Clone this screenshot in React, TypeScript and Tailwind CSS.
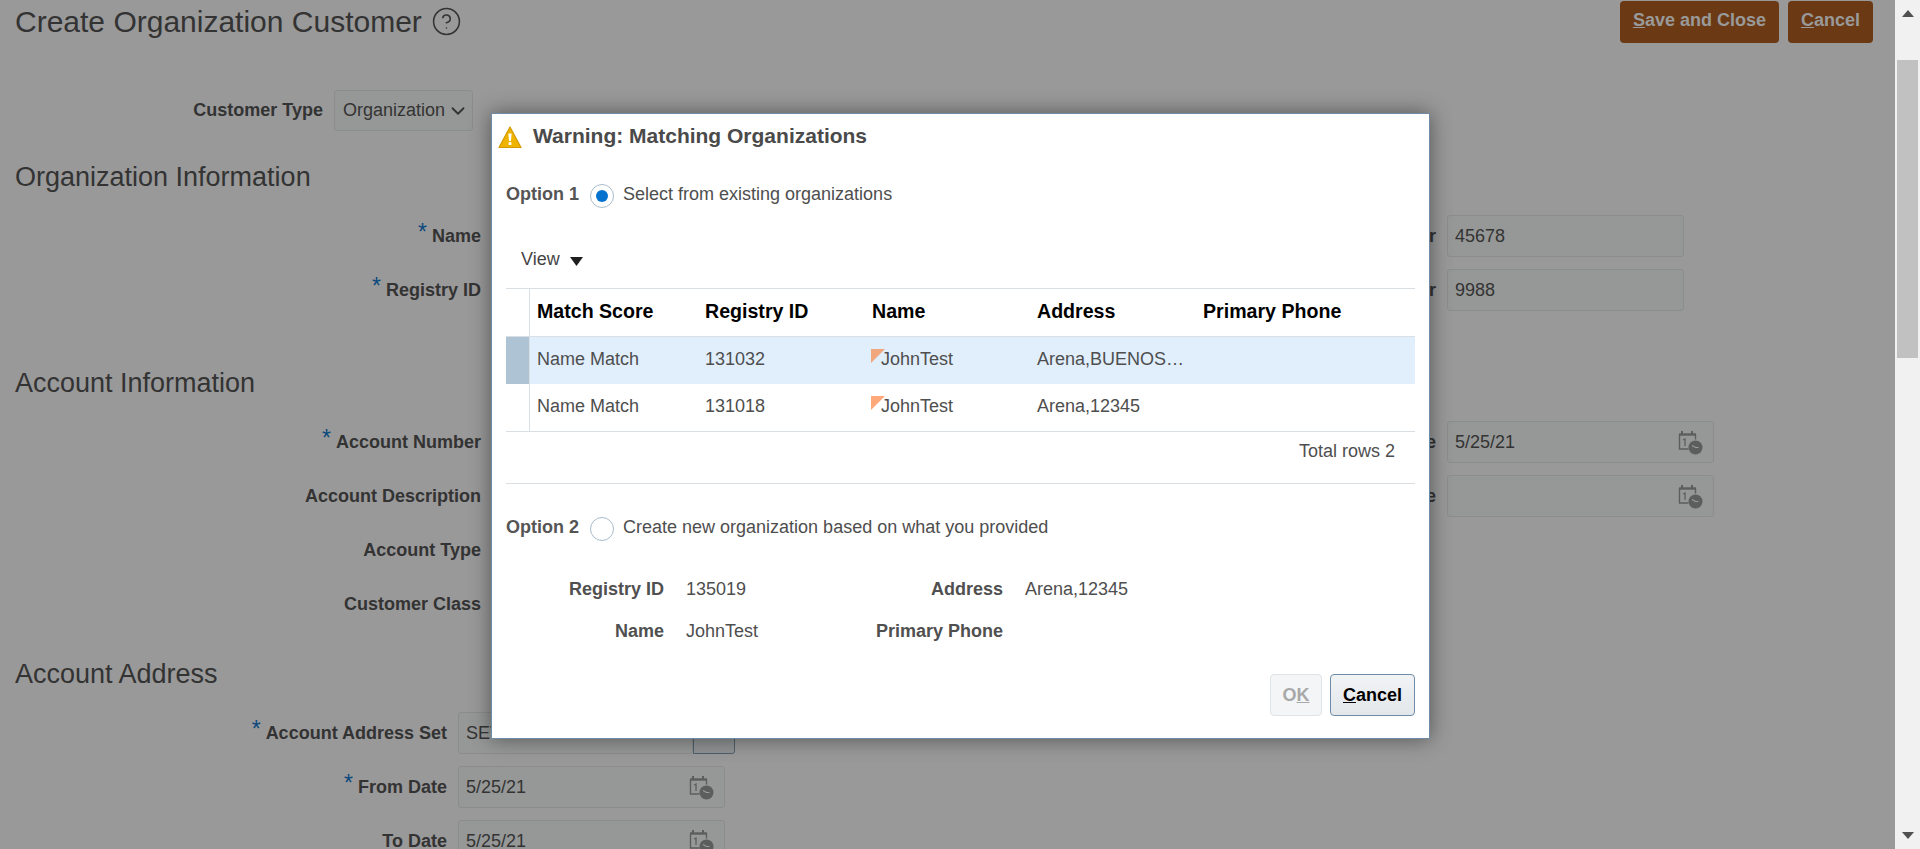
import React from "react";
import { ChevronDown, CircleHelp } from "lucide-react";

const font = { fontFamily: '"Liberation Sans", Arial, sans-serif' };

function CalendarIcon() {
  return (
    <svg width="25" height="25" viewBox="0 0 25 25" className="shrink-0">
      <path d="M1 4.5h17" stroke="#5c5e5e" strokeWidth="2.4" fill="none" />
      <path d="M4 1v3M14 1v3" stroke="#5c5e5e" strokeWidth="2" fill="none" />
      <path d="M1.5 4.5v14.5h9" stroke="#5c5e5e" strokeWidth="1.4" fill="none" />
      <path d="M17.5 4.5v5" stroke="#5c5e5e" strokeWidth="1.4" fill="none" />
      <path d="M5 10l2-1v7" stroke="#5c5e5e" strokeWidth="1.3" fill="none" />
      <circle cx="17.5" cy="17.5" r="7" fill="#5c5e5e" />
      <path d="M14 15.5l3.5 2h3" stroke="#999999" strokeWidth="1.2" fill="none" />
    </svg>
  );
}

function Label({ text, required, width }: { text: string; required?: boolean; width: string }) {
  return (
    <div className={`${width} shrink-0 pr-[11px] text-right text-[18px] font-bold text-[#333333]`}>
      {required && <span className="relative -top-[2px] mr-[5px] text-[23px] font-normal leading-none text-[#0c4a7e]">*</span>}
      {text}
    </div>
  );
}

function Input({ value, width, calendar }: { value?: string; width: string; calendar?: boolean }) {
  return (
    <div className={`${width} flex h-[42px] shrink-0 items-center justify-between rounded-[3px] border border-[#8b8d8d] bg-[#969897] pl-[7px] pr-[10px] text-[18px] text-[#333333]`}>
      <span className="whitespace-nowrap">{value}</span>
      {calendar && <CalendarIcon />}
    </div>
  );
}

function Heading({ children, className }: { children: React.ReactNode; className: string }) {
  return <h2 className={`pl-[15px] text-[27px] leading-[30px] text-[#333333] ${className}`}>{children}</h2>;
}

function Row({ children, className = "" }: { children: React.ReactNode; className?: string }) {
  return <div className={`flex h-[54px] items-center ${className}`}>{children}</div>;
}

function RightField({ label, value, width, calendar }: { label: string; value?: string; width: string; calendar?: boolean }) {
  return (
    <div className="ml-auto flex items-center">
      <Label text={label} width="w-[200px]" />
      <div className="w-[448px]">
        <Input value={value} width={width} calendar={calendar} />
      </div>
    </div>
  );
}

function Radio({ checked }: { checked?: boolean }) {
  return (
    <span className="mt-[5px] flex h-[24px] w-[24px] shrink-0 items-center justify-center rounded-full border border-[#a9bccb] bg-white">
      {checked && <span className="h-[12px] w-[12px] rounded-full bg-[#0572ce]" />}
    </span>
  );
}

const columns = [
  { title: "Match Score", width: "w-[168px]" },
  { title: "Registry ID", width: "w-[167px]" },
  { title: "Name", width: "w-[165px]" },
  { title: "Address", width: "w-[166px]" },
  { title: "Primary Phone", width: "w-[166px]" },
];

const rows = [
  { score: "Name Match", id: "131032", name: "JohnTest", address: "Arena,BUENOS…", selected: true, flag: "#f0a77e" },
  { score: "Name Match", id: "131018", name: "JohnTest", address: "Arena,12345", selected: false, flag: "#ffa97a" },
];

function MatchDialog() {
  return (
    <div className="absolute left-[491px] top-[113px] h-[626px] w-[939px] border border-[#6f8ca6] bg-white px-[14px] text-[18px] text-[#4e4e4e] shadow-[0_0_20px_rgba(0,0,0,0.45)]">
      {/* Title */}
      <div className="flex h-[44px] items-center">
        <svg width="24" height="24" viewBox="0 0 24 24" className="-ml-[8px] mt-[2px] shrink-0">
          <path d="M12 2L23 22.5H1Z" fill="#efb302" stroke="#d39a00" strokeWidth="1.2" strokeLinejoin="round" />
          <path d="M10.4 8.5h3.2l-.6 7.5h-2Z" fill="#ffffff" />
          <rect x="10.6" y="17.2" width="2.8" height="2.8" fill="#ffffff" />
        </svg>
        <div className="ml-[11px] text-[21px] font-bold text-[#4a4a4a]">Warning: Matching Organizations</div>
      </div>

      {/* Option 1 */}
      <div className="mt-[21px] flex h-[30px] items-start leading-[30px]">
        <span className="w-[84px] font-bold text-[#555555]">Option 1</span>
        <Radio checked />
        <span className="ml-[9px]">Select from existing organizations</span>
      </div>

      {/* Toolbar */}
      <div className="mt-[38px] flex h-[24px] items-center pl-[15px] text-[#444444]">
        View
        <svg width="13" height="9" viewBox="0 0 13 9" className="ml-[10px] mt-[5px]">
          <path d="M0 0h13L6.5 9Z" fill="#1f1f1f" />
        </svg>
      </div>

      {/* Table */}
      <div className="mt-[17px] border-y border-[#d9dfe3]">
        <div className="flex h-[48px] border-b border-[#d9dfe3]">
          <div className="w-[24px] shrink-0 border-r border-[#d9dfe3]" />
          {columns.map((c) => (
            <div key={c.title} className={`flex ${c.width} shrink-0 items-center pb-[2px] pl-[7px] text-[19.6px] font-bold text-black`}>
              {c.title}
            </div>
          ))}
        </div>
        {rows.map((r) => (
          <div key={r.id} className={`flex h-[47px] ${r.selected ? "bg-[#e1effd]" : ""}`}>
            <div className={`w-[24px] shrink-0 border-r border-[#d9dfe3] ${r.selected ? "bg-[#aec3d4]" : ""}`} />
            <div className="flex w-[168px] shrink-0 items-center pb-[3px] pl-[7px]">{r.score}</div>
            <div className="flex w-[167px] shrink-0 items-center pb-[3px] pl-[7px]">{r.id}</div>
            <div className="relative flex w-[165px] shrink-0 items-center pb-[3px] pl-[16px]">
              <svg width="14" height="14" viewBox="0 0 14 14" className="absolute left-[6px] top-[12px]">
                <path d="M0 0h14L0 14Z" fill={r.flag} />
              </svg>
              {r.name}
            </div>
            <div className="flex w-[166px] shrink-0 items-center pb-[3px] pl-[7px]">{r.address}</div>
            <div className="w-[166px] shrink-0" />
          </div>
        ))}
      </div>
      <div className="flex h-[52px] items-center justify-end border-b border-[#d9dfe3] pb-[13px] pr-[20px] text-[#4e4e4e]">Total rows 2</div>

      {/* Option 2 */}
      <div className="mt-[28px] flex h-[30px] items-start leading-[30px]">
        <span className="w-[84px] font-bold text-[#555555]">Option 2</span>
        <Radio />
        <span className="ml-[9px]">Create new organization based on what you provided</span>
      </div>

      <div className="mt-[36px] grid grid-cols-[158px_180px_159px_1fr] gap-y-[20px] leading-[22px]">
        <div className="text-right font-bold text-[#505050]">Registry ID</div>
        <div className="pl-[22px]">135019</div>
        <div className="text-right font-bold text-[#505050]">Address</div>
        <div className="pl-[22px]">Arena,12345</div>
        <div className="text-right font-bold text-[#505050]">Name</div>
        <div className="pl-[22px]">JohnTest</div>
        <div className="text-right font-bold text-[#505050]">Primary Phone</div>
        <div />
      </div>

      {/* Actions */}
      <div className="mt-[32px] flex justify-end gap-[8px]">
        <div className="flex h-[42px] w-[52px] items-center justify-center rounded-[4px] border border-[#dfe4e8] bg-[#f3f5f7] font-bold text-[#a8a8a8]">
          <span>O<span className="underline">K</span></span>
        </div>
        <div className="flex h-[42px] w-[85px] items-center justify-center rounded-[4px] border border-[#6f8ca6] bg-gradient-to-b from-[#f1f3f5] to-[#e3e7ea] font-bold text-black">
          <span><span className="underline">C</span>ancel</span>
        </div>
      </div>
    </div>
  );
}

export default function App() {
  return (
    <div className="flex h-[849px] w-[1920px] overflow-hidden bg-[#999999]" style={font}>
      <div className="relative h-full w-[1895px] shrink-0 overflow-hidden">
        {/* Header */}
        <div className="flex h-[43px] justify-between pr-[22px] pt-[1px]">
          <div className="flex items-start pl-[15px] text-[30px] leading-[42px] text-[#333333]">
            <h1>Create Organization Customer</h1>
            <CircleHelp size={31} strokeWidth={1.2} className="ml-[9px] mt-[5px]" />
          </div>
          <div className="flex gap-[9px]">
            <div className="flex h-[42px] w-[159px] items-center justify-center rounded-[4px] bg-[#6b3a15] pb-[3px] text-[18px] font-bold text-[#999999]">
              <span><span className="underline">S</span>ave and Close</span>
            </div>
            <div className="flex h-[42px] w-[85px] items-center justify-center rounded-[4px] bg-[#6b3a15] pb-[3px] text-[18px] font-bold text-[#999999]">
              <span><span className="underline">C</span>ancel</span>
            </div>
          </div>
        </div>

        {/* Customer type */}
        <div className="mt-[47px] flex items-center">
          <Label text="Customer Type" width="w-[334px]" />
          <div className="flex h-[41px] w-[139px] items-center justify-between rounded-[3px] border border-[#8b8d8d] bg-[#969897] pl-[8px] pr-[3px] text-[#333333]">
            <span className="text-[18px]">Organization</span>
            <ChevronDown size={22} strokeWidth={2} />
          </div>
        </div>

        <Heading className="mt-[31px]">Organization Information</Heading>
        <div className="mt-[17px]">
          <Row>
            <Label text="Name" required width="w-[492px]" />
            <RightField label="Number" value="45678" width="w-[237px]" />
          </Row>
          <Row>
            <Label text="Registry ID" required width="w-[492px]" />
            <RightField label="Number" value="9988" width="w-[237px]" />
          </Row>
        </div>

        <Heading className="mt-[51px]">Account Information</Heading>
        <div className="mt-[17px]">
          <Row>
            <Label text="Account Number" required width="w-[492px]" />
            <RightField label="Date" value="5/25/21" width="w-[267px]" calendar />
          </Row>
          <Row>
            <Label text="Account Description" width="w-[492px]" />
            <RightField label="Date" width="w-[267px]" calendar />
          </Row>
          <Row>
            <Label text="Account Type" width="w-[492px]" />
          </Row>
          <Row>
            <Label text="Customer Class" width="w-[492px]" />
          </Row>
        </div>

        <Heading className="mt-[28px]">Account Address</Heading>
        <div className="mt-[17px]">
          <Row>
            <Label text="Account Address Set" required width="w-[458px]" />
            <Input value="SET" width="w-[235px]" />
            <div className="h-[42px] w-[42px] rounded-br-[3px] rounded-tr-[3px] border border-[#4e5f6c] bg-[#909394]" />
          </Row>
          <Row>
            <Label text="From Date" required width="w-[458px]" />
            <Input value="5/25/21" width="w-[267px]" calendar />
          </Row>
          <Row>
            <Label text="To Date" width="w-[458px]" />
            <Input value="5/25/21" width="w-[267px]" calendar />
          </Row>
        </div>

        <MatchDialog />
      </div>

      {/* Scrollbar */}
      <div className="flex h-full w-[25px] flex-col items-center bg-[#f1f1f1]">
        <svg width="12" height="7" viewBox="0 0 12 7" className="mt-[10px] shrink-0">
          <path d="M6 0l6 7H0Z" fill="#505050" />
        </svg>
        <div className="mt-[43px] h-[298px] w-[21px] bg-[#c1c1c1]" />
        <svg width="12" height="7" viewBox="0 0 12 7" className="mb-[10px] mt-auto shrink-0">
          <path d="M0 0h12L6 7Z" fill="#505050" />
        </svg>
      </div>
    </div>
  );
}
